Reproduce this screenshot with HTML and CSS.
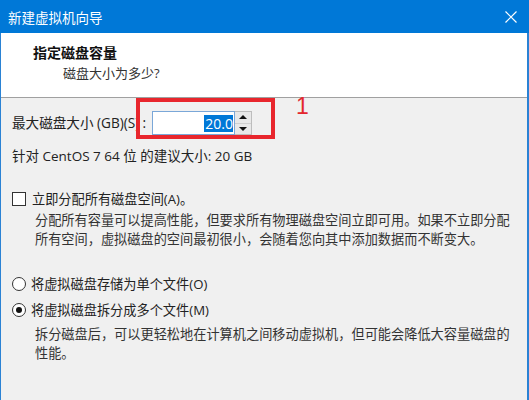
FILE: index.html
```html
<!DOCTYPE html>
<html>
<head>
<meta charset="utf-8">
<link rel="stylesheet" href="styles.css">
</head>
<body>
<div class="window">
  <div class="titlebar">
    <span class="title">新建虚拟机向导</span>
    <svg class="close" width="12" height="12" viewBox="0 0 12 12"><path d="M0.5 0.5 L11.5 11.5 M11.5 0.5 L0.5 11.5" stroke="#fff" stroke-width="1.2" fill="none"/></svg>
  </div>
  <div class="header">
    <div class="h-title">指定磁盘容量</div>
    <div class="h-sub">磁盘大小为多少?</div>
  </div>
  <div class="body">
    <div class="size-row">
      <span class="label"><span>最大磁盘大小 (GB)(S)</span><span class="colon">:</span></span>
      <div class="spin">
        <div class="spin-input"><span class="sel">20.0</span></div>
        <div class="spin-btns">
          <div class="spin-btn"><span class="tri-up"></span></div>
          <div class="spin-btn"><span class="tri-down"></span></div>
        </div>
      </div>
    </div>
    <div class="recommend">针对 CentOS 7 64 位 的建议大小: 20 GB</div>
    <div class="check-row"><span class="checkbox"></span><span>立即分配所有磁盘空间(A)。</span></div>
    <div class="desc desc1">分配所有容量可以提高性能，但要求所有物理磁盘空间立即可用。如果不立即分配<br>所有空间，虚拟磁盘的空间最初很小，会随着您向其中添加数据而不断变大。</div>
    <div class="radio-row r1"><span class="radio"></span><span>将虚拟磁盘存储为单个文件(O)</span></div>
    <div class="radio-row r2"><span class="radio checked"></span><span>将虚拟磁盘拆分成多个文件(M)</span></div>
    <div class="desc desc2">拆分磁盘后，可以更轻松地在计算机之间移动虚拟机，但可能会降低大容量磁盘的<br>性能。</div>
  </div>
  <div class="mark-box"></div>
  <div class="mark-num">1</div>
</div>
</body>
</html>
```
FILE: styles.css
```css
* { box-sizing: border-box; }
html, body { margin: 0; padding: 0; }
body {
  width: 529px;
  height: 400px;
  overflow: hidden;
  font-family: "Open Sans", "Noto Sans CJK SC", sans-serif;
  color: #222;
}
.window {
  position: relative;
  width: 529px;
  height: 400px;
  border-left: 1px solid #2a82d4;
  border-right: 2px solid #2a82d4;
  background: #f0f0f0;
  display: flex;
  flex-direction: column;
}
.titlebar {
  height: 33px;
  background: #0078d7;
  display: flex;
  align-items: center;
  justify-content: space-between;
  padding: 0 12px 0 8px;
  margin: 0 -2px 0 -1px;
}
.title {
  color: #fff;
  font-family: "Noto Sans CJK SC", sans-serif;
  font-size: 13.5px;
  line-height: 20px;
}
.close { display: block; }
.header {
  height: 65px;
  background: #fff;
  border-bottom: 1px solid #a0a0a0;
  padding: 10px 0 0 32px;
}
.h-title {
  font-size: 14px;
  font-weight: bold;
  line-height: 20px;
  color: #111;
}
.h-sub {
  font-size: 13px;
  line-height: 20px;
  padding-left: 30px;
  color: #333;
}
.body {
  flex: 1;
  padding: 0 11px;
  font-size: 13.2px;
  white-space: nowrap;
}
.size-row {
  margin-top: 13px;
  height: 24px;
  display: flex;
  align-items: center;
}
.label {
  line-height: 20px;
  width: 140px;
  flex: none;
  display: flex;
  justify-content: space-between;
  font-size: 13.6px;
  padding-right: 6px;
}
.spin { display: flex; height: 24px; }
.spin-input {
  width: 83px;
  height: 24px;
  background: #fff;
  border: 1px solid #7aa7d8;
  display: flex;
  align-items: center;
  justify-content: flex-end;
  padding-right: 1px;
}
.sel {
  background: #0078d7;
  color: #fff;
  font-size: 14px;
  line-height: 17px;
  padding: 0 0 0 1px;
}
.spin-btns {
  width: 17px;
  height: 24px;
  display: flex;
  flex-direction: column;
  border: 1px solid #bdbdbd;
  border-left: none;
}
.spin-btn {
  flex: 1;
  background: #e8e8e8;
  display: flex;
  align-items: center;
  justify-content: center;
}
.spin-btn + .spin-btn { border-top: 1px solid #cfcfcf; }
.tri-up {
  width: 0; height: 0;
  border-left: 4px solid transparent;
  border-right: 4px solid transparent;
  border-bottom: 4px solid #111;
}
.tri-down {
  width: 0; height: 0;
  border-left: 4px solid transparent;
  border-right: 4px solid transparent;
  border-top: 4px solid #111;
}
.recommend {
  margin-top: 11px;
  line-height: 20px;
  font-size: 13.5px;
}
.check-row, .radio-row {
  display: flex;
  align-items: center;
  height: 20px;
  line-height: 20px;
}
.check-row { margin-top: 23px; }
.checkbox {
  width: 14px;
  height: 14px;
  border: 1px solid #333;
  background: #fff;
  margin-right: 6px;
}
.desc {
  line-height: 19px;
  padding-left: 23px;
  color: #333;
}
.desc1 { margin-top: 2px; }
.r1 { margin-top: 25px; }
.r2 { margin-top: 6px; }
.radio {
  width: 14px;
  height: 14px;
  border: 1px solid #333;
  border-radius: 50%;
  background: #fff;
  margin-right: 5px;
  display: flex;
  align-items: center;
  justify-content: center;
}
.radio.checked::after {
  content: "";
  width: 6px;
  height: 6px;
  border-radius: 50%;
  background: #111;
}
.desc2 { margin-top: 5px; }
.mark-box {
  position: absolute;
  left: 135px;
  top: 98px;
  width: 139px;
  height: 41px;
  border: 4px solid #e8262d;
}
.mark-num {
  position: absolute;
  left: 295px;
  top: 93px;
  font-family: "Liberation Sans", sans-serif;
  font-size: 23px;
  line-height: 26px;
  color: #e3262d;
}
```
